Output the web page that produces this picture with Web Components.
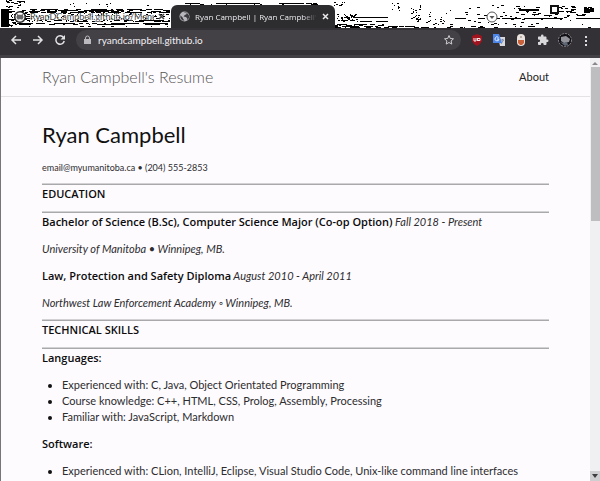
<!DOCTYPE html>
<html lang="en">
<head>
<meta charset="utf-8">
<title>Ryan Campbell | Ryan Campbell's Resume</title>
<style>
html, body { margin: 0; height: 100%; }
body { font-family: Lato, "Open Sans", sans-serif; font-size: 11px; overflow: hidden; }
</style>
</head>
<body>
<browser-window>
  <tab-strip slot="tabs">
    <browser-tab>RyanDCampbell.github.io/Menu</browser-tab>
    <browser-tab active>Ryan Campbell | Ryan Campbell's</browser-tab>
  </tab-strip>
  <tool-bar slot="toolbar" url="ryandcampbell.github.io"></tool-bar>
  <site-header home="Ryan Campbell's Resume"><a href="#about">About</a></site-header>
  <resume-page name="Ryan Campbell" contact="email@myumanitoba.ca • (204) 555-2853">
    <resume-section heading="EDUCATION">
      <resume-entry heading="Bachelor of Science (B.Sc), Computer Science Major (Co-op Option)" when="Fall 2018 - Present">University of Manitoba • Winnipeg, MB.</resume-entry>
      <resume-entry heading="Law, Protection and Safety Diploma" when="August 2010 - April 2011">Northwest Law Enforcement Academy ◦ Winnipeg, MB.</resume-entry>
    </resume-section>
    <resume-section heading="TECHNICAL SKILLS">
      <skill-list heading="Languages:" items="Experienced with: C, Java, Object Orientated Programming|Course knowledge: C++, HTML, CSS, Prolog, Assembly, Processing|Familiar with: JavaScript, Markdown"></skill-list>
      <skill-list heading="Software:" items="Experienced with: CLion, IntelliJ, Eclipse, Visual Studio Code, Unix-like command line interfaces"></skill-list>
    </resume-section>
  </resume-page>
</browser-window>

<script>
function define(name, render, after) {
  customElements.define(name, class extends HTMLElement {
    connectedCallback() {
      if (this.shadowRoot) return;
      const root = this.attachShadow({ mode: 'open' });
      root.innerHTML = render(this);
      if (after) after(root, this);
    }
  });
}

/* Pixel speckle for the title bar: runs of black pixels, from a fixed seed. */
function speckle() {
  let seed = 77, d = '';
  const rnd = () => (seed = (seed * 16807) % 2147483647) / 2147483647;
  const run = (x, y, w, h = 1) => { d += `M${x} ${y}h${w}v${h}h-${w}z`; };
  const fill = (x0, x1, y0, y1, density, len) => {
    for (let y = y0; y < y1; y++)
      for (let x = x0; x < x1;) {
        const w = 1 + Math.floor(rnd() * len);
        if (rnd() < density) run(x, y, Math.min(w, x1 - x));
        x += w;
      }
  };
  run(1, 9, 8, 18); fill(6, 25, 0, 8, .3, 4); fill(9, 16, 9, 27, .4, 3);
  fill(16, 30, 10, 25, .4, 4); fill(30, 170, 9, 11, .5, 7); fill(30, 170, 11, 13, .6, 4);
  fill(30, 170, 13, 20, .16, 3); fill(30, 170, 20, 22, .5, 4);
  fill(20, 168, 23, 25, .55, 9); fill(14, 168, 26, 27, .1, 4); fill(70, 150, 3, 7, .04, 2);
  fill(184, 322, 3, 4, .75, 9); fill(184, 322, 4, 5, .2, 4);
  fill(337, 358, 14, 22, .42, 3); fill(358, 388, 17, 18, .8, 6); fill(358, 388, 21, 22, .7, 6);
  fill(334, 384, 24, 28, .45, 5); fill(384, 465, 26, 28, .55, 6); fill(330, 345, 2, 7, .3, 4);
  fill(392, 400, 3, 12, .22, 2); fill(411, 421, 4, 23, .2, 2); fill(421, 448, 12, 25, .12, 2);
  fill(450, 600, 18, 19, .8, 6); fill(450, 600, 4, 25, .045, 3); fill(500, 590, 14, 16, .3, 8);
  fill(465, 600, 26, 28, .1, 4); fill(556, 590, 5, 13, .16, 8);
  run(519, 9, 20, 2); fill(584, 594, 7, 13, .75, 3); run(584, 9, 9, 3);
  return d;
}

define('browser-window', () => `
<style>
:host { display: flex; flex-direction: column; height: 100vh; background: #fdfbfe; }
.view { flex: 1; min-height: 0; display: grid; grid-template-columns: minmax(0, 1fr) 10px; border-left: 1px solid #77757a; }
.doc { overflow: hidden; }
.bar { display: grid; grid-template-rows: 9px minmax(0, 1fr) 10px; background: #f0eff1; }
.track { display: grid; grid-template-rows: 38% 1fr; }
.thumb { background: #bebdbf; margin-left: 1px; }
button { border: 0; padding: 0; background: #f0eff1; display: grid; place-items: center; }
button:last-child { background: #cfced0; }
</style>
<slot name="tabs"></slot><slot name="toolbar"></slot>
<div class="view">
  <main class="doc"><slot></slot></main>
  <div class="bar">
    <button aria-label="Scroll up"><svg width="6" height="4"><path d="M0 4L3 1L6 4z" fill="#8a888c"/></svg></button>
    <div class="track"><div class="thumb"></div></div>
    <button aria-label="Scroll down"><svg width="6" height="4"><path d="M0 0H6L3 4z" fill="#3d3c40"/></svg></button>
  </div>
</div>`);

define('tab-strip', () => `
<style>
:host { display: grid; height: 28px; background: #fff; overflow: hidden; }
.noise, .tabs { grid-area: 1 / 1; }
.tabs { display: flex; padding: 5px 0 0 9px; }
</style>
<svg class="noise" width="600" height="28" shape-rendering="crispEdges" aria-hidden="true">
  <path d="${speckle()}" fill="#000"/>
  <path d="M551 6h7v7h-7z" fill="#fff" stroke="#111" stroke-width="2"/>
  <g shape-rendering="auto"><circle cx="492" cy="17" r="5" fill="#fff" stroke="#555"/><path d="M489.500 16h5l-2.500 3z" fill="#555"/></g>
</svg>
<div class="tabs"><slot></slot></div>`);

define('browser-tab', el => {
  const active = el.hasAttribute('active');
  return `
<style>
:host { display: flex; align-items: center; gap: 4px; box-sizing: border-box; width: 162px; height: 23px; padding: 0 6px 0 5px; font-size: 9px; color: #444; }
:host([active]) { width: 164px; padding-left: 8px; gap: 5px; font-family: "Open Sans", sans-serif; font-size: 8px; background: #2d2c2f; color: #eceaee; border-radius: 6px 6px 0 0; }
.title { flex: 1; min-width: 0; overflow: hidden; white-space: nowrap; }
:host([active]) .title { -webkit-mask: linear-gradient(90deg, #000 88%, transparent); mask: linear-gradient(90deg, #000 88%, transparent); }
:host(:not([active])) .title { text-shadow: 1px 0 #fff, -1px 0 #fff; }
svg { flex: none; }
button { border: 0; padding: 0; background: none; color: inherit; display: grid; }
</style>
${active
  ? `<svg width="11" height="11" viewBox="0 0 24 24"><circle cx="12" cy="12" r="11" fill="#b7b6ba"/><path d="M3 9l5 5 1 3 3 4-5-1-4-5zM11 2l6 1-1 4-4 2-2 3 5 1 3 3-1 4 5-5v-5l-4-5-6-2z" fill="#3c3b3f"/></svg>`
  : `<svg width="12" height="12" viewBox="0 0 16 16"><circle cx="8" cy="8" r="7" fill="#fff" stroke="#222" stroke-width="2"/><path d="M5 14v-3c-2-1-2-3-1-5V4l2 1h4l2-1v2c1 2 1 4-1 5v3l-1-3H6z" fill="#666"/></svg>`}
<span class="title"><slot></slot></span>
<button aria-label="Close tab"><svg width="7" height="7"><path d="M1 1L6 6M6 1L1 6" stroke="currentColor" stroke-width="1.500"/></svg></button>`;
});

define('tool-bar', el => `
<style>
:host { display: flex; align-items: center; box-sizing: border-box; height: 30px; padding: 0 8px 3px 5px; background: #333135; border-bottom: 3px solid #434045; }
button { border: 0; padding: 0; width: 22px; height: 20px; flex: none; background: none; display: grid; place-items: center; }
form { flex: 1; min-width: 0; display: flex; align-items: center; height: 20px; margin: 0 5px; padding: 0 1px 0 7px; border-radius: 10px; background: #434146; }
input { flex: 1; min-width: 0; border: 0; margin: 0; padding: 0 0 0 6px; background: none; color: #f0eff2; font: inherit; font-size: 10px; outline: 0; }
.menu { width: 12px; margin-left: 4px; }
</style>
<button aria-label="Back"><svg width="12" height="12"><path d="M11 6H2M6 2L2 6L6 10" fill="none" stroke="#e2e1e4" stroke-width="1.500"/></svg></button>
<button aria-label="Forward"><svg width="12" height="12"><path d="M1 6H10M6 2L10 6L6 10" fill="none" stroke="#e2e1e4" stroke-width="1.500"/></svg></button>
<button aria-label="Reload"><svg width="12" height="12"><path d="M9.500 3.500A4.200 4.200 0 1 0 10.200 7" fill="none" stroke="#e2e1e4" stroke-width="1.500"/><path d="M11 1V5.500H6.500z" fill="#e2e1e4"/></svg></button>
<form><svg width="9" height="10"><path d="M2.500 5V3a2 2 0 0 1 4 0v2" fill="none" stroke="#bbb9bd"/><path d="M1 4h7v5H1z" fill="#bbb9bd"/></svg>
  <input aria-label="Address" value="${el.getAttribute('url')}">
  <button type="button" aria-label="Bookmark"><svg width="12" height="12" viewBox="0 0 24 24"><path d="M12 3l2.600 6 6.400.6-4.800 4.300 1.400 6.300L12 17l-5.600 3.200 1.400-6.300L3 9.600 9.400 9z" fill="none" stroke="#cfced1" stroke-width="2"/></svg></button>
</form>
<button aria-label="uBlock"><svg width="12" height="12"><path d="M6 0l5 2v5l-2 3-3 2-3-2-2-3V2z" fill="#a01420"/><path d="M3 4v3h2V4M6.500 4v3M7 4.500h2v2H7" fill="none" stroke="#f5e6e7"/></svg></button>
<button aria-label="Translate"><svg width="12" height="12"><path d="M5 3h7v9H7z" fill="#d8d9de"/><path d="M8 6h3M9.500 5v1M8 10l2.500-4" stroke="#78809a" stroke-width=".8"/><path d="M0 0h6l3 9H0z" fill="#4c86ea"/><path d="M5.500 3.500A2 2 0 1 0 6 5H4" fill="none" stroke="#e9f0fd"/></svg></button>
<button aria-label="Extension"><svg width="8" height="12"><rect x="0" y="0" width="8" height="12" rx="4" fill="#e9e3df"/><path d="M1 6h6v3l-2 2H3L1 9z" fill="#c9613a"/><circle cx="4" cy="3" r="1" fill="#b09a90"/></svg></button>
<button aria-label="Extensions"><svg width="12" height="12" viewBox="0 0 24 24"><path d="M20.500 11H19V7c0-1.100-.9-2-2-2h-4V3.500a2.500 2.500 0 0 0-5 0V5H4c-1.100 0-2 .9-2 2v3.800h1.500a2.700 2.700 0 0 1 0 5.400H2V20c0 1.100.9 2 2 2h3.800v-1.500a2.700 2.700 0 0 1 5.400 0V22H17c1.100 0 2-.9 2-2v-4h1.500a2.500 2.500 0 0 0 0-5z" fill="#d9d8db"/></svg></button>
<button aria-label="Profile"><svg width="14" height="14"><circle cx="7" cy="7" r="6.500" fill="#111014" stroke="#8a888e" stroke-dasharray="2 1"/><path d="M3 4l5-1 4 3-1 3-5 1-3-2z" fill="#92939b"/><path d="M2 9l4 1 3-1 1 3-3 1z" fill="#5f6674"/></svg></button>
<button class="menu" aria-label="Menu"><svg width="3" height="11" fill="#dddcdf"><path d="M0 1h2v2H0zM0 5h2v2H0zM0 9h2v2H0z"/></svg></button>`);

define('site-header', el => `
<style>
:host { display: flex; align-items: center; justify-content: space-between; box-sizing: border-box; height: 39px; padding: 0 41px 2px; border-bottom: 1px solid #e4e2e6; }
a { font-size: 16px; font-weight: 300; color: #555; text-decoration: none; }
::slotted(a) { color: #222; text-decoration: none; }
</style>
<a href="#">${el.getAttribute('home')}</a><nav><slot></slot></nav>`);

define('resume-page', el => `
<style>
:host { display: block; padding: 22px 41px 0; color: #2d2c2f; line-height: 16px; }
h1 { margin: 0; font-size: 22px; line-height: 32px; font-weight: 400; color: #111; }
p { margin: 9px 0 7px; font-size: 9px; }
</style>
<h1>${el.getAttribute('name')}</h1><p>${el.getAttribute('contact')}</p><slot></slot>`);

const bold = 'font-family: "Open Sans", sans-serif; font-size: 11px; font-weight: 600; color: #0c0b0d;';

define('resume-section', el => `
<style>
:host { display: block; margin-bottom: 8px; }
hr { margin: 0; border: solid; border-width: 1px 0; border-color: #d2d1d3 transparent #a9a8aa; }
h2 { margin: 1px 0 9px; ${bold} }
.body { display: grid; gap: 11px; padding-top: 1px; }
</style>
<hr><h2>${el.getAttribute('heading')}</h2><hr><div class="body"><slot></slot></div>`);

define('resume-entry', el => `
<style>
:host { display: grid; gap: 11px; }
p { margin: 0; font-style: italic; white-space: nowrap; }
strong { font-style: normal; ${bold} }
</style>
<p><strong>${el.getAttribute('heading')}</strong> ${el.getAttribute('when')}</p><p><slot></slot></p>`);

define('skill-list', el => `
<style>
:host { display: grid; gap: 11px; }
h3 { margin: 0; ${bold} }
ul { margin: 0; padding-left: 20px; }
li::marker { color: #111; }
</style>
<h3>${el.getAttribute('heading')}</h3>
<ul>${el.getAttribute('items').split('|').map(t => `<li>${t}</li>`).join('')}</ul>`);
</script>
</body>
</html>
